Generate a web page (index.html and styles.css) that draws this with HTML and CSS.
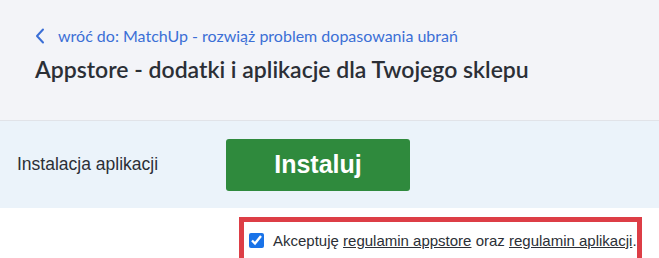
FILE: index.html
```html
<!DOCTYPE html>
<html lang="pl">
<head>
<meta charset="utf-8">
<title>Appstore</title>
<link rel="stylesheet" href="styles.css">
</head>
<body>
<header class="top">
  <a class="back" href="#">
    <svg class="chev" width="10" height="16" viewBox="0 0 10 16"><path d="M8 1.5 L2 8 L8 14.5" fill="none" stroke="#3b6fd6" stroke-width="2" stroke-linecap="round" stroke-linejoin="round"/></svg>
    <span>wróć do: MatchUp - rozwiąż problem dopasowania ubrań</span>
  </a>
  <h1 class="title">Appstore - dodatki i aplikacje dla Twojego sklepu</h1>
</header>
<section class="install">
  <span class="install-label">Instalacja aplikacji</span>
  <button class="btn" type="button">Instaluj</button>
</section>
<div class="terms-row">
  <label class="terms">
    <input type="checkbox" checked>
    <span class="terms-text">Akceptuję <a href="#">regulamin appstore</a> oraz <a href="#">regulamin aplikacji</a>.</span>
  </label>
</div>
</body>
</html>
```
FILE: styles.css
```css
* { box-sizing: border-box; }
html, body { margin: 0; padding: 0; }
body { background: #fff; width: 659px; height: 258px; overflow: hidden; }

.top {
  background: #f3f4f8;
  height: 121px;
  border-bottom: 1px solid #e1e3e8;
  padding: 27px 0 0 35px;
}
.back {
  display: flex;
  align-items: center;
  gap: 13px;
  color: #3b6fd6;
  text-decoration: none;
  font-family: Lato, "Open Sans", sans-serif;
  font-size: 16px;
  line-height: 18px;
}
.chev { display: block; }
.title {
  margin: 9px 0 0;
  font-family: Lato, "Open Sans", sans-serif;
  font-weight: 600;
  font-size: 23px;
  line-height: 30px;
  color: #2b2f36;
}

.install {
  background: #ebf3fa;
  height: 87px;
  display: flex;
  align-items: center;
  padding-left: 17px;
}
.install-label {
  width: 209px;
  font-family: "Liberation Sans", Arial, sans-serif;
  font-size: 17.5px;
  color: #2b2f36;
}
.btn {
  width: 184px;
  height: 52px;
  border: 0;
  border-radius: 3px;
  background: #2f8a3d;
  color: #fff;
  font-family: "Liberation Sans", Arial, sans-serif;
  font-weight: bold;
  font-size: 25px;
}

.terms-row {
  display: flex;
  justify-content: flex-end;
  padding: 9px 17px 0 0;
}
.terms {
  display: flex;
  align-items: center;
  gap: 9px;
  width: 403px;
  height: 42px;
  border: 5px solid #dd3e46;
  border-bottom-width: 0;
  padding: 0 0 0 5px;
  font-family: "Liberation Sans", Arial, sans-serif;
  font-size: 15px;
  color: #2b2f36;
  white-space: nowrap;
}
.terms input {
  margin: 0;
  width: 15px;
  height: 15px;
  accent-color: #1a73e8;
}
.terms a { color: #2b2f36; }
```
